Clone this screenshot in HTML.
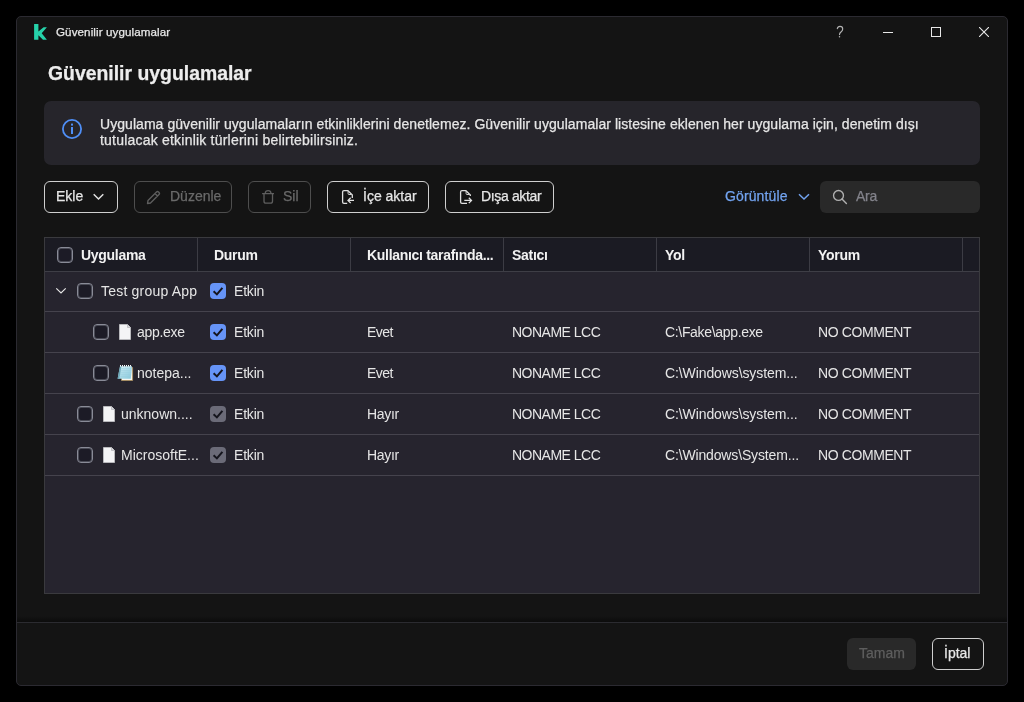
<!DOCTYPE html>
<html><head><meta charset="utf-8">
<style>
*{box-sizing:border-box;margin:0;padding:0}
html,body{width:1024px;height:702px;background:#000;overflow:hidden}
body{font-family:"Liberation Sans",sans-serif;color:#e6e6e6;position:relative}
.a{-webkit-text-stroke:0.25px currentColor}
.a{position:absolute;white-space:nowrap}
#win{position:absolute;left:16px;top:16px;width:992px;height:670px;background:#141414;border:1px solid #2b2a31;border-radius:5px;overflow:hidden}
.t14{font-size:14px;line-height:16px}
.btn{position:absolute;top:181px;height:32px;border:1.5px solid #cfcfcf;border-radius:6px;background:#141414}
.btn.dis{border-color:#4e4e4e}
.cb{position:absolute;width:16px;height:16px;border:1px solid #898b97;box-shadow:inset 0 0 0 1px #4a4b56;border-radius:4px;background:#1c1b26}
.cbc{position:absolute;width:16px;height:16px;border-radius:4px;background:#6694f7}
.cbg{background:#6b6b78}
.hd{position:absolute;top:238px;height:33px;background:#1b1b23}
.sep{position:absolute;left:45px;width:934px;height:1px;background:#45434d}
.vd{position:absolute;top:238px;width:1px;height:33px;background:#3c3c44}
.a.th{font-weight:bold;font-size:14px;line-height:16px;letter-spacing:-0.3px;color:#f2f2f2;-webkit-text-stroke:0}
.a.td{font-size:14px;line-height:16px;color:#e6e6e6;-webkit-text-stroke:0}
</style></head><body>
<div id="root" style="position:absolute;left:0;top:0;width:1024px;height:702px;will-change:transform">
<div id="win"></div>

<!-- title bar -->
<svg class="a" style="left:34px;top:24px" width="14" height="17" viewBox="0 0 14 17">
<path d="M0.1 0.1 H4.4 V7.4 L9.6 3.2 H12.9 L7.7 9.3 L12.9 15.8 H9 L4.4 11.2 V15.8 H0.1 Z" fill="#26d2aa"/>
</svg>
<div class="a" style="left:56px;top:25px;font-size:11.6px;line-height:13px;letter-spacing:0.1px;color:#e8e8e8">Güvenilir uygulamalar</div>
<svg class="a" style="left:832px;top:22px" width="16" height="20" viewBox="0 0 16 20"><path d="M5.3 6.6 Q5.8 4.3 8 4.3 Q10.7 4.3 10.7 6.9 Q10.7 8.5 9.2 9.7 Q7.5 11 7.5 12.6" fill="none" stroke="#b4b4b4" stroke-width="1.15" stroke-linecap="round"/><circle cx="7.5" cy="14.7" r="0.75" fill="#b4b4b4"/></svg>
<div class="a" style="left:883px;top:32px;width:10px;height:1px;background:#e8e8e8"></div>
<div class="a" style="left:931px;top:27px;width:10px;height:10px;border:1px solid #e8e8e8"></div>
<svg class="a" style="left:979px;top:27px" width="10" height="10" viewBox="0 0 10 10"><path d="M0 0L10 10M10 0L0 10" stroke="#e8e8e8" stroke-width="1.1"/></svg>

<!-- heading -->
<div class="a" style="left:48px;top:62px;font-size:19.4px;line-height:22px;font-weight:bold;color:#ededed">Güvenilir uygulamalar</div>

<!-- info box -->
<div class="a" style="left:44px;top:101px;width:936px;height:64px;background:#26252b;border-radius:7px"></div>
<svg class="a" style="left:61px;top:118px" width="22" height="22" viewBox="0 0 22 22">
<circle cx="11" cy="11" r="9.1" fill="none" stroke="#4f8ff7" stroke-width="1.8"/>
<rect x="10" y="9" width="2" height="7" fill="#4f8ff7"/><rect x="10" y="5.6" width="2" height="2" fill="#4f8ff7"/>
</svg>
<div class="a t14" style="left:100px;top:116px;color:#e6e6e6;letter-spacing:0.054px">Uygulama güvenilir uygulamaların etkinliklerini denetlemez. Güvenilir uygulamalar listesine eklenen her uygulama için, denetim dışı</div>
<div class="a t14" style="left:100px;top:132px;color:#e6e6e6;letter-spacing:0.21px">tutulacak etkinlik türlerini belirtebilirsiniz.</div>

<!-- toolbar -->
<div class="btn" style="left:44px;width:74px"></div>
<div class="a t14" style="left:56px;top:188px">Ekle</div>
<svg class="a" style="left:93px;top:193px" width="11" height="8" viewBox="0 0 11 8"><path d="M0.7 1.2 L5.5 6 L10.3 1.2" fill="none" stroke="#e0e0e0" stroke-width="1.5"/></svg>

<div class="btn dis" style="left:134px;width:98px"></div>
<svg class="a" style="left:146px;top:190px" width="15" height="15" viewBox="0 0 15 15"><path d="M1.5 13.5 L2 10.5 L10.5 2 Q11.5 1 12.5 2 L13 2.5 Q14 3.5 13 4.5 L4.5 13 Z M9 3.5 L11.5 6" fill="none" stroke="#5e5e5e" stroke-width="1.4" stroke-linejoin="round"/></svg>
<div class="a t14" style="left:170px;top:188px;color:#6a6a6a">Düzenle</div>

<div class="btn dis" style="left:248px;width:63px"></div>
<svg class="a" style="left:261px;top:189px" width="14" height="16" viewBox="0 0 14 16"><path d="M1.1 4.6 H13 M4.3 4.6 V4 Q4.3 1.6 7.1 1.6 Q9.9 1.6 9.9 4 V4.6 M3 4.6 V12.2 Q3 14.2 5 14.2 H9.5 Q11.5 14.2 11.5 12.2 V4.6" fill="none" stroke="#5e5e5e" stroke-width="1.3" stroke-linejoin="round"/></svg>
<div class="a t14" style="left:283px;top:188px;color:#6a6a6a">Sil</div>

<div class="btn" style="left:327px;width:102px"></div>
<svg class="a" style="left:341px;top:189px" width="16" height="16" viewBox="0 0 16 16"><path d="M6.2 14.4 H3 Q1.6 14.4 1.6 13 V3.1 Q1.6 1.7 3 1.7 H7 L11.3 6 V8.9" fill="none" stroke="#e0e0e0" stroke-width="1.3" stroke-linejoin="round"/><path d="M7.1 1.9 V4.6 Q7.1 5.5 8 5.5 H11.1" fill="none" stroke="#d0d0d0" stroke-width="1"/><path d="M13 11.4 H7 M9.7 8.7 L7 11.4 L9.7 14.1" fill="none" stroke="#e0e0e0" stroke-width="1.3"/></svg>
<div class="a t14" style="left:363px;top:188px">İçe aktar</div>

<div class="btn" style="left:445px;width:109px"></div>
<svg class="a" style="left:459px;top:189px" width="16" height="16" viewBox="0 0 16 16"><path d="M8 14.4 H3 Q1.6 14.4 1.6 13 V3.1 Q1.6 1.7 3 1.7 H7 L11.3 6 V7" fill="none" stroke="#e0e0e0" stroke-width="1.3" stroke-linejoin="round"/><path d="M7.1 1.9 V4.6 Q7.1 5.5 8 5.5 H11.1" fill="none" stroke="#d0d0d0" stroke-width="1"/><path d="M5.3 11.4 H12.5 M9.8 8.7 L12.5 11.4 L9.8 14.1" fill="none" stroke="#e0e0e0" stroke-width="1.3"/></svg>
<div class="a t14" style="left:481px;top:188px;letter-spacing:-0.35px">Dışa aktar</div>

<div class="a t14" style="left:725px;top:188px;color:#72a3ef;letter-spacing:0.12px">Görüntüle</div>
<svg class="a" style="left:798px;top:193px" width="12" height="8" viewBox="0 0 12 8"><path d="M1 1.2 L6 6 L11 1.2" fill="none" stroke="#72a3ef" stroke-width="1.5"/></svg>

<div class="a" style="left:820px;top:181px;width:160px;height:32px;background:#292929;border-radius:6px"></div>
<svg class="a" style="left:832px;top:189px" width="16" height="16" viewBox="0 0 16 16"><circle cx="6.5" cy="6.4" r="4.95" fill="none" stroke="#b0b0b0" stroke-width="1.35"/><path d="M10 9.9 L14.4 14.4" stroke="#b0b0b0" stroke-width="1.4" stroke-linecap="round"/></svg>
<div class="a t14" style="left:856px;top:188px;color:#82828a;letter-spacing:-0.3px">Ara</div>

<!-- table -->
<div class="a" style="left:44px;top:237px;width:936px;height:357px;background:#26242e;border:1px solid #3a3a3e"></div>
<div class="hd" style="left:45px;width:934px"></div>
<div class="a" style="left:45px;top:271px;width:934px;height:1px;background:#3e3e46"></div>
<div class="vd" style="left:197px"></div>
<div class="vd" style="left:350px"></div>
<div class="vd" style="left:503px"></div>
<div class="vd" style="left:656px"></div>
<div class="vd" style="left:809px"></div>
<div class="vd" style="left:962px"></div>

<div class="cb" style="left:57px;top:247px"></div>
<div class="a th" style="left:81px;top:247px">Uygulama</div>
<div class="a th" style="left:214px;top:247px">Durum</div>
<div class="a th" style="left:367px;top:247px">Kullanıcı tarafında...</div>
<div class="a th" style="left:512px;top:247px">Satıcı</div>
<div class="a th" style="left:665px;top:247px">Yol</div>
<div class="a th" style="left:818px;top:247px">Yorum</div>

<div class="sep" style="top:311px"></div>
<div class="sep" style="top:352px"></div>
<div class="sep" style="top:393px"></div>
<div class="sep" style="top:434px"></div>
<div class="sep" style="top:475px"></div>

<!-- group row -->
<svg class="a" style="left:55px;top:287px" width="12" height="8" viewBox="0 0 12 8"><path d="M1.3 1.3 L6 6 L10.7 1.3" fill="none" stroke="#e8e8e8" stroke-width="1.15"/></svg>
<div class="cb" style="left:77px;top:283px"></div>
<div class="a td" style="left:101px;top:283px;letter-spacing:0.2px">Test group App</div>
<div class="cbc" style="left:210px;top:283px"><svg width="16" height="16" viewBox="0 0 16 16" style="position:absolute;left:0;top:0"><path d="M3.6 8.3 L6.9 11.4 L12.4 4.8" fill="none" stroke="#15151d" stroke-width="2"/></svg></div>
<div class="a td" style="left:234px;top:283px;letter-spacing:-0.2px">Etkin</div>

<!-- row 1 -->
<div class="cb" style="left:93px;top:324px"></div>
<svg class="a" style="left:119px;top:324px" width="12" height="16" viewBox="0 0 12 16"><path d="M0.5 0.5 H8.5 L11.5 3.5 V15.5 H0.5 Z" fill="#f4f4f6" stroke="#b9b9bd" stroke-width="1"/><path d="M8.5 0.5 V3.5 H11.5" fill="#d8d8dc" stroke="#b9b9bd" stroke-width="0.8"/></svg>
<div class="a td" style="left:137px;top:324px;letter-spacing:-0.3px">app.exe</div>
<div class="cbc" style="left:210px;top:324px"><svg width="16" height="16" viewBox="0 0 16 16" style="position:absolute;left:0;top:0"><path d="M3.6 8.3 L6.9 11.4 L12.4 4.8" fill="none" stroke="#15151d" stroke-width="2"/></svg></div>
<div class="a td" style="left:234px;top:324px;letter-spacing:-0.2px">Etkin</div>
<div class="a td" style="left:367px;top:324px;letter-spacing:-0.5px">Evet</div>
<div class="a td" style="left:512px;top:324px;letter-spacing:-0.5px">NONAME LCC</div>
<div class="a td" style="left:665px;top:324px;letter-spacing:-0.33px">C:\Fake\app.exe</div>
<div class="a td" style="left:818px;top:324px;letter-spacing:-0.4px">NO COMMENT</div>

<!-- row 2 -->
<div class="cb" style="left:93px;top:365px"></div>
<svg class="a" style="left:117px;top:364px" width="17" height="17" viewBox="0 0 17 17">
<defs><linearGradient id="gb" x1="0" y1="0" x2="1" y2="1"><stop offset="0" stop-color="#d8f3fa"/><stop offset="1" stop-color="#86c8dc"/></linearGradient></defs>
<path d="M4.5 3.5 H15.6 V16.5 H4.5 Z" fill="#f7f6f0" stroke="#a88d5e" stroke-width="0.9"/>
<path d="M3 2.2 H15 L13.8 14.8 H0.6 Z" fill="url(#gb)"/>
<path d="M3 2.2 L0.6 14.8 H2.4 L4.4 2.2 Z" fill="#6aa5b6"/>
<path d="M3.6 4.8H14.7M3.3 6.8H14.5M3 8.8H14.3M2.7 10.8H14.1M2.4 12.8H13.9" stroke="#98cddc" stroke-width="0.7"/>
<path d="M3.5 2.6 V1 M5.5 2.6 V1 M7.5 2.6 V1 M9.5 2.6 V1 M11.5 2.6 V1 M13.5 2.6 V1" stroke="#f4fafb" stroke-width="1"/>
</svg>
<div class="a td" style="left:137px;top:365px">notepa...</div>
<div class="cbc" style="left:210px;top:365px"><svg width="16" height="16" viewBox="0 0 16 16" style="position:absolute;left:0;top:0"><path d="M3.6 8.3 L6.9 11.4 L12.4 4.8" fill="none" stroke="#15151d" stroke-width="2"/></svg></div>
<div class="a td" style="left:234px;top:365px;letter-spacing:-0.2px">Etkin</div>
<div class="a td" style="left:367px;top:365px;letter-spacing:-0.5px">Evet</div>
<div class="a td" style="left:512px;top:365px;letter-spacing:-0.5px">NONAME LCC</div>
<div class="a td" style="left:665px;top:365px;letter-spacing:-0.1px">C:\Windows\system...</div>
<div class="a td" style="left:818px;top:365px;letter-spacing:-0.4px">NO COMMENT</div>

<!-- row 3 -->
<div class="cb" style="left:77px;top:406px"></div>
<svg class="a" style="left:103px;top:406px" width="12" height="16" viewBox="0 0 12 16"><path d="M0.5 0.5 H8.5 L11.5 3.5 V15.5 H0.5 Z" fill="#f4f4f6" stroke="#b9b9bd" stroke-width="1"/><path d="M8.5 0.5 V3.5 H11.5" fill="#d8d8dc" stroke="#b9b9bd" stroke-width="0.8"/></svg>
<div class="a td" style="left:121px;top:406px">unknown....</div>
<div class="cbc cbg" style="left:210px;top:406px"><svg width="16" height="16" viewBox="0 0 16 16" style="position:absolute;left:0;top:0"><path d="M3.6 8.3 L6.9 11.4 L12.4 4.8" fill="none" stroke="#15151d" stroke-width="2"/></svg></div>
<div class="a td" style="left:234px;top:406px;letter-spacing:-0.2px">Etkin</div>
<div class="a td" style="left:367px;top:406px;letter-spacing:-0.3px">Hayır</div>
<div class="a td" style="left:512px;top:406px;letter-spacing:-0.5px">NONAME LCC</div>
<div class="a td" style="left:665px;top:406px;letter-spacing:-0.1px">C:\Windows\system...</div>
<div class="a td" style="left:818px;top:406px;letter-spacing:-0.4px">NO COMMENT</div>

<!-- row 4 -->
<div class="cb" style="left:77px;top:447px"></div>
<svg class="a" style="left:103px;top:447px" width="12" height="16" viewBox="0 0 12 16"><path d="M0.5 0.5 H8.5 L11.5 3.5 V15.5 H0.5 Z" fill="#f4f4f6" stroke="#b9b9bd" stroke-width="1"/><path d="M8.5 0.5 V3.5 H11.5" fill="#d8d8dc" stroke="#b9b9bd" stroke-width="0.8"/></svg>
<div class="a td" style="left:121px;top:447px">MicrosoftE...</div>
<div class="cbc cbg" style="left:210px;top:447px"><svg width="16" height="16" viewBox="0 0 16 16" style="position:absolute;left:0;top:0"><path d="M3.6 8.3 L6.9 11.4 L12.4 4.8" fill="none" stroke="#15151d" stroke-width="2"/></svg></div>
<div class="a td" style="left:234px;top:447px;letter-spacing:-0.2px">Etkin</div>
<div class="a td" style="left:367px;top:447px;letter-spacing:-0.3px">Hayır</div>
<div class="a td" style="left:512px;top:447px;letter-spacing:-0.5px">NONAME LCC</div>
<div class="a td" style="left:665px;top:447px;letter-spacing:-0.15px">C:\Windows\System...</div>
<div class="a td" style="left:818px;top:447px;letter-spacing:-0.4px">NO COMMENT</div>

<!-- footer -->
<div class="a" style="left:17px;top:616px;width:990px;height:6px;background:linear-gradient(rgba(10,10,10,0),rgba(10,10,10,0.8))"></div>
<div class="a" style="left:17px;top:622px;width:990px;height:1px;background:#2b2b30"></div>
<div class="a" style="left:847px;top:638px;width:69px;height:32px;background:#292929;border-radius:6px"></div>
<div class="a t14" style="left:859px;top:645px;color:#5e5e5e">Tamam</div>
<div class="btn" style="left:932px;top:638px;width:52px"></div>
<div class="a t14" style="left:944px;top:645px">İptal</div>
</div>
</body></html>
